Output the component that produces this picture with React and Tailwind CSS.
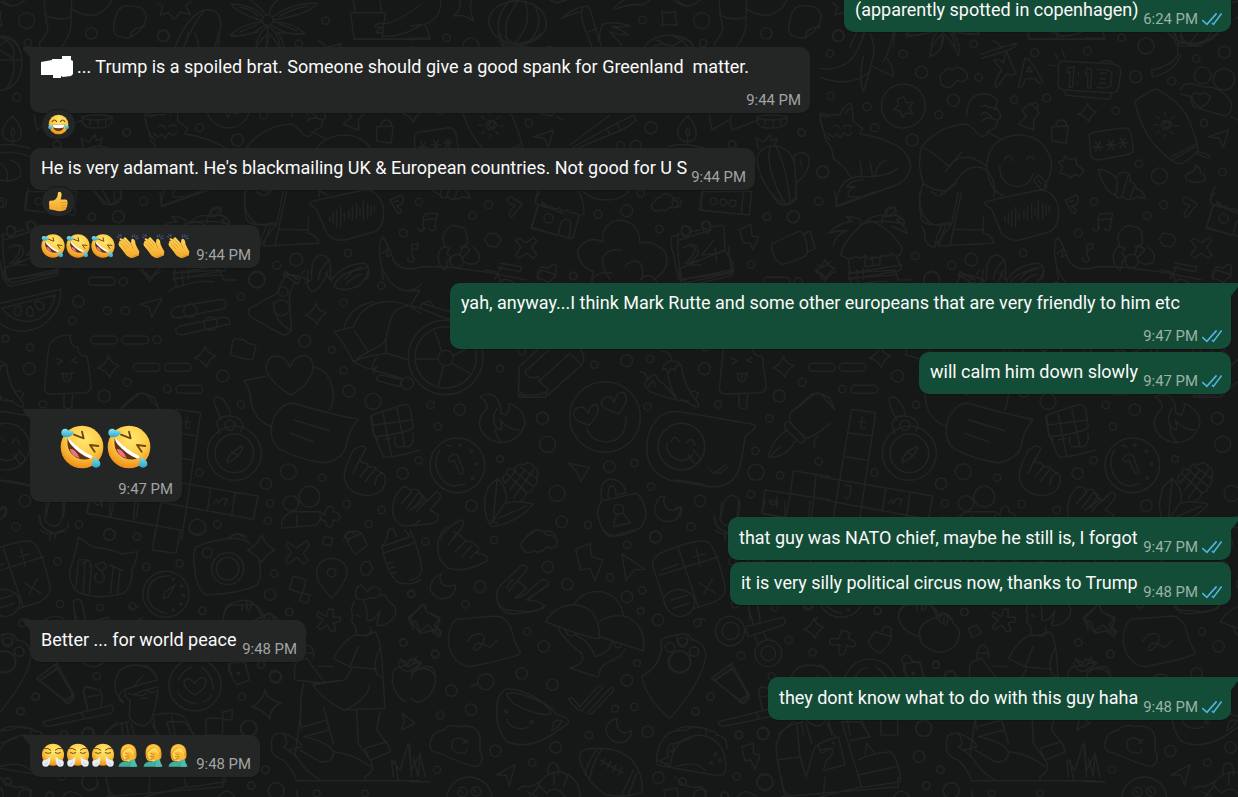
import React from "react";

/* ---------- wallpaper doodles ---------- */
// Each sheet is drawn at 3x and placed at (ox, oy) on the repeating wallpaper tile.
const SPARK = (x, y, r) =>
  `M${x} ${y - r}Q${x + r * 0.25} ${y - r * 0.25} ${x + r} ${y - r * 0.1}Q${x + r * 0.3} ${y + r * 0.3} ${x + r * 0.15} ${y + r}Q${x - r * 0.25} ${y + r * 0.3} ${x - r} ${y + r * 0.15}Q${x - r * 0.2} ${y - r * 0.2} ${x} ${y - r}Z`;

const SHEETS = [
  {
    ox: 0, oy: 0,
    circles: [[80,62,24],[274,100,17],[490,108,16],[977,62,11],[84,129,11],[50,292,12],[803,60,16],[380,398,11],[172,434,12],[275,650,11],[355,650,18],[34,692,14],[95,676,12],[5,608,14]],
    paths: [
      "M132 0Q136 50 144 88Q138 108 118 128Q118 142 128 146M215 0L212 85Q205 115 185 140M134 45Q175 65 215 50",
      "M212 25Q250 50 285 45Q325 30 335 0",
      "M372 18Q348 30 345 60Q335 95 350 106Q372 116 390 114Q432 88 438 58Q440 32 420 22Q395 16 372 18ZM390 112Q395 80 436 82",
      "M470 8L488 20L480 45L505 38L522 58L542 36L572 44L556 18L574 4",
      "M526 140Q556 56 610 30Q665 22 662 80L655 140M552 140Q580 68 612 34",
      "M798 44Q770 10 735 -10M808 42Q812 10 850 -12M790 50Q750 10 692 12Q720 45 788 62M818 50Q880 5 952 10Q925 45 820 60M788 66Q735 68 692 104Q750 115 796 74M820 66Q875 65 914 100Q865 112 812 74M800 78Q770 110 768 140M808 78Q840 110 840 140M803 80L800 140M720 22Q750 25 775 48M925 18Q880 25 840 48M720 96Q745 85 770 75M890 92Q860 78 838 72",
      "M1052 38H1156L1145 118H1062ZM1065 36L1060 0M1145 38L1140 0M1260 15Q1180 75 1150 70Q1125 70 1125 80L1150 82Q1125 90 1130 98L1150 98Q1145 108 1155 108Q1200 112 1260 78M1150 118H1260",
      "M-10 108Q66 110 66 190Q60 272 -10 272M0 112Q50 130 40 175Q50 220 20 265M0 180H62M40 175L0 150",
      "M38 348Q-6 388 14 415Q38 435 62 414Q70 384 38 348ZM38 385Q28 400 38 410Q50 400 38 385M38 412V432M-20 440Q20 425 90 445M0 460Q40 450 88 470",
      "M0 490Q30 510 20 540M30 480Q70 490 60 530Q30 550 0 540",
      "M85 565Q78 600 80 630L125 636M285 575L310 612Q340 615 355 600Q370 590 360 575M310 575L330 608",
      "M480 575L485 618L600 575",
      "M735 575Q725 640 770 672Q800 680 830 672L780 738M770 575Q800 600 800 575M830 672L850 575",
      "M10 700Q5 720 12 790M12 720Q60 705 108 690M45 740Q75 725 68 765L40 795H80M12 790L20 838L170 815L160 740",
      "M580 660Q600 640 640 650Q620 625 650 620Q670 625 660 645Q690 655 688 672M555 672Q620 655 690 672",
    ],
  },
  {
    ox: 410, oy: 0,
    circles: [[697,60,11],[723,383,18],[632,436,11],[677,437,16],[966,433,11],[1175,397,11],[1238,515,17],[1226,604,12],[1150,650,18],[1071,651,11],[911,604,10],[940,607,10],[968,610,10],[748,687,11],[650,632,18],[564,643,12],[692,580,11],[1023,793,11],[416,655,14],[489,828,11]],
    paths: [
      "M755 33Q775 42 798 35Q793 55 802 76Q778 70 755 78Q762 55 755 33Z",
      "M150 0Q155 30 130 48Q165 42 192 64Q176 30 184 0",
      "M92 0Q95 55 45 72Q20 76 0 78M45 72L60 115H0",
      "M236 65Q240 10 323 2Q405 10 410 75Q400 125 323 135Q240 120 236 65ZM300 2Q250 50 270 120M325 2Q270 70 295 130M345 4Q370 80 310 132M370 12Q410 70 355 128M270 122Q270 138 290 138H350",
      "M455 55Q485 25 530 18L540 28L568 125M520 20Q505 40 530 100L545 138M515 35Q490 38 455 55M575 75Q600 60 662 78Q620 82 605 80Q640 90 655 105Q620 105 600 95L635 135M578 75Q560 110 575 138M530 98L560 85",
      "M420 0L440 8L470 0M610 25Q640 -5 660 -5M615 28Q655 10 700 15L720 0M790 0Q830 35 870 0M800 -5Q810 15 835 18",
      "M705 138Q730 105 780 105Q840 108 850 138M740 120L775 138M820 118L790 138M730 140Q760 125 790 140",
      "M480 435L600 345M488 442L620 370L672 345L678 362L640 388L510 442M590 385L600 405M620 368L630 390",
      "M898 345L905 390L960 358L965 390Q1010 375 1042 360M965 345L960 358",
      "M1042 350Q1085 338 1132 350L1130 368Q1118 386 1087 384Q1050 386 1042 368ZM1042 355Q1085 365 1130 355M1065 360V375M1090 362V378M1112 360V375",
      "M1040 475Q1055 436 1090 438Q1145 440 1155 500L1160 595Q1145 618 1120 614Q1050 560 1040 475ZM1080 442Q1065 500 1120 605M1098 440Q1130 500 1140 605M1155 500L1152 468Q1188 445 1198 478Q1198 520 1160 548M1045 446L1038 415L1062 426L1080 403L1084 422L1102 415L1094 436M1170 480L1175 500",
      "M1230 340Q1235 400 1260 420M1230 340Q1250 340 1260 350",
      "M875 575L1025 574L1018 645L868 630ZM1000 575L994 642",
      "M730 630Q715 612 735 605Q738 590 752 592Q765 572 780 586Q795 592 790 600Q810 602 804 616Q795 628 780 622Q765 638 755 628Q740 636 730 630Z",
      "M520 575Q550 602 595 600Q640 598 658 572",
      "M390 580Q375 590 376 608Q390 620 398 612Q410 628 422 618Q435 632 446 624Q460 640 472 630Q485 644 496 638Q512 652 522 640Q522 600 505 575M385 615L363 685L488 716L508 646M445 705L452 670Q465 650 480 662Q486 680 475 714",
      "M578 725Q575 665 632 660Q688 668 690 728Q730 720 765 755Q785 810 730 838M578 725Q530 705 503 750Q505 800 550 815M600 838Q570 800 580 770Q600 740 635 752M645 800Q660 780 685 785Q705 800 695 838M550 815L545 838",
      "M785 710Q780 740 790 760L805 838M785 710L815 702M842 695L868 690M905 680L935 676Q942 676 942 690L945 750M815 682Q828 670 840 690Q840 710 825 712Q812 705 815 682ZM875 668Q890 655 902 678Q902 698 888 700Q875 692 875 668ZM820 745Q850 720 855 750Q850 770 825 790L865 782M910 722L875 765L928 760M915 745L920 785M810 805L945 750L968 790Q970 815 950 820L815 838",
      "M988 690L1022 672L1026 708L1046 712L1028 750L1020 728L1000 728Z",
      "M1088 730L1165 695Q1190 690 1192 760Q1185 775 1120 793Q1095 790 1085 745ZM1178 705L1200 692L1215 745L1195 755",
      "M1225 795Q1240 810 1260 785M1215 810Q1235 815 1235 838",
    ],
  },
  {
    ox: 145, oy: 0,
    circles: [[55,107,18],[30,160,11],[249,162,12],[305,217,18],[476,232,11],[32,288,11],[141,320,12],[356,344,12],[400,301,18],[582,299,11],[680,294,12],[644,158,12],[802,153,12],[461,131,11],[905,113,11],[978,138,24],[947,230,18],[1213,157,18],[1129,176,11],[1055,243,12],[1148,226,25],[1212,238,32],[887,332,11],[164,383,12],[277,420,18],[8,516,18],[1152,369,11],[957,491,11],[1018,528,24],[1208,516,11],[822,605,11],[1031,614,12],[982,647,11],[775,699,12],[609,759,11],[286,768,11],[454,779,19],[395,796,12],[250,318,66],[336,838,24],[935,783,20],[1040,374,8]],
    paths: [
      "M150 100Q165 130 160 165Q150 220 130 275Q115 240 130 170M0 232Q90 265 145 218M0 205Q50 215 92 180Q125 140 130 95M160 200L220 230Q220 200 200 175M220 95Q215 140 190 185",
      "M482 165Q500 155 590 130Q585 145 560 152Q575 200 588 215Q590 230 560 222L530 262Q515 258 545 210L520 180Q540 175 550 190L560 152L485 175M520 122Q540 130 545 145M595 260L615 175Q630 170 668 245Q655 255 645 235L615 238Q610 265 595 262ZM620 215L628 200L636 215Z",
      "M715 200Q715 182 735 184L880 192Q905 196 902 220L895 265Q890 280 870 278L730 270Q710 265 715 240ZM735 272L738 286L870 298L875 280M840 190Q845 178 875 185L878 192M705 160L715 180M725 150L735 172M688 195L710 198",
      "M742 205L762 200L758 262L748 262L750 215L740 218ZM775 218V226M773 245V252M800 205L815 208L812 265L802 262L804 222L796 222ZM832 208Q880 205 875 230Q868 236 875 250Q870 270 830 262M840 220H858M842 236H856M838 250H856",
      "M362 245Q355 225 372 215Q380 200 398 210Q410 195 430 208Q450 225 438 240Q425 250 412 240Q400 260 385 262Q365 262 362 245Z",
      "M250 290L260 308L280 306L268 325L278 342L258 338L248 352L240 334L220 328L236 315L232 298Z",
      "M0 345L20 350Q25 340 60 345Q70 320 90 308Q100 320 98 362L128 385L120 402Q180 410 235 440Q270 465 272 500Q265 540 230 555L50 620Q45 585 70 550Q95 525 140 530Q200 530 235 505M0 360Q10 385 18 425Q35 430 40 475Q60 490 75 505Q85 525 95 530M75 345Q80 330 90 325M40 380Q50 370 60 385M70 380Q85 370 95 380M25 400L40 412L50 402L60 415L72 398L85 408L95 398M120 480L125 525M150 485L158 528M165 525Q170 490 200 480M130 540Q95 540 80 560L105 560Q80 570 85 590L115 590",
      "M440 350Q440 300 470 285Q500 275 520 290Q540 300 525 320Q545 340 540 355L532 362Q535 385 510 390L495 408Q475 412 465 390L440 372M485 320Q495 310 505 322Q520 320 528 330M485 345Q490 330 505 342L515 350M485 365Q500 345 530 360",
      "M440 372Q360 375 305 440Q345 460 375 490L390 498Q410 470 445 472Q475 478 500 500M305 440Q290 490 310 550Q340 575 380 572Q410 545 425 520Q470 485 505 515Q530 550 522 590M375 515L425 455M310 550Q290 600 305 660Q320 680 365 672L390 668M365 585Q400 555 410 550M425 575L390 735M305 680Q315 690 315 720Q330 745 345 740L350 710Q360 695 365 672M375 680L355 738L522 730Q515 705 490 700V650M400 688L490 690M500 395L540 415",
      "M672 560Q710 500 685 460Q660 405 595 405Q510 410 500 490Q500 560 545 585M540 498Q535 550 590 560Q630 558 640 520M552 480Q565 455 580 482M618 480Q630 458 645 482M640 540L665 570Q685 565 678 545L655 525ZM655 540L665 552M522 570Q535 582 550 585",
      "M492 608Q510 600 660 570Q700 570 715 620Q720 680 690 695L600 720Q565 725 545 700L515 628Q495 615 492 608ZM555 650V665M565 638V672M575 630V680M587 622V680M598 640V660M612 632V655M622 620V660M635 612V655M645 625V645M655 602V658M668 610V655M678 615V645M688 618V635",
      "M605 330L630 310Q650 325 658 340L640 360L642 390Q625 385 595 372L620 350ZM635 315Q645 300 655 315L650 330",
      "M695 380L745 378L738 430L695 422ZM708 376Q710 358 728 360Q742 365 738 378",
      SPARK(802, 338, 28),
      "M808 405Q810 398 830 395L910 383Q930 383 934 405L940 450Q938 460 920 464L835 480Q815 480 812 465ZM820 440H848M826 425L842 452M842 425L826 452M858 434H888M866 420L880 448M880 420L866 448M896 428H922M902 415L916 442M916 415L902 442",
      "M945 305Q990 268 1012 268Q1070 300 1100 345Q1125 400 1135 450Q1100 490 1075 492Q1045 480 1000 430Q960 380 945 305ZM1055 470L1130 430M1060 478L1125 440M1030 365Q1050 355 1055 375Q1050 390 1030 388Q1018 375 1030 362M1035 335V345M1010 350L1018 356M1000 375H1012M1010 402L1018 394M1035 412V402M1060 402L1052 395M1075 378H1063M1062 350L1054 357",
      "M1165 410L1226 390L1210 442L1198 415Z",
      "M1080 270Q1090 245 1120 252L1150 260Q1210 260 1235 310Q1235 345 1215 348L1120 320Q1110 300 1115 290L1082 282M1115 290Q1120 270 1140 285Q1155 270 1170 290Q1172 305 1145 322Q1120 315 1115 290M1235 350L1254 360",
      "M1065 100L1075 130Q1070 150 1075 165Q1050 200 995 210L997 230Q1060 220 1082 165M1075 130H1110Q1160 130 1190 100M1080 110L1110 135",
      "M1132 455Q1160 460 1170 468L1165 475L1130 460M1100 540Q1090 525 1110 518Q1130 510 1125 495Q1145 505 1140 518Q1160 525 1155 540Q1135 555 1100 540Z",
      "M735 468L750 480L768 475L770 495L792 510L780 530L762 522L755 535L742 525L720 520L728 500L715 485L730 482Z",
      "M835 508Q870 510 890 535Q895 560 885 585Q850 570 835 508ZM890 530Q900 510 925 520Q935 530 930 545Q950 550 948 565Q970 570 975 595L950 590Q945 600 935 595Q920 605 910 590Q895 600 885 585M925 525L905 590M945 555L930 592",
      "M735 600L770 585Q780 595 770 612L755 618L770 632Q765 645 755 635ZM748 605L760 602",
      "M1085 600Q1095 585 1105 595L1132 612L1100 652Q1088 650 1095 635L1110 615L1095 612Z",
      "M835 685V650L840 642L878 640L870 680M838 660L875 655M818 685A10 8 0 1 0 836 680M852 685A10 8 0 1 0 872 680M790 772A10 8 0 1 0 802 770L800 735L818 730V745L804 750",
      "M140 662Q195 665 248 745L240 765Q225 775 215 760Q200 775 190 765Q175 780 165 770Q150 785 135 765Q120 780 110 770L85 778L62 765Q70 720 140 662ZM185 670Q190 625 228 622Q225 635 205 650Q230 640 245 655L230 660Q255 675 262 700Q240 690 215 678M125 665Q115 650 80 650L95 665Q60 665 25 700Q60 690 80 692Q45 705 40 738M85 780L90 815M230 770L240 795M135 770V800L180 795V765M155 770L160 795M85 820L245 795L240 812L85 838M130 805V838",
      SPARK(15, 808, 30),
      "M705 770Q700 720 715 712Q735 745 745 780Q770 820 830 800L900 800L1050 820M705 770L715 838M712 760L730 745L725 770L740 765",
      "M900 740Q885 705 905 690Q920 670 940 680Q965 680 965 705Q975 740 945 740M900 740L915 745L905 760L918 775L905 785Q910 800 900 810Q880 800 880 770Q880 745 900 740ZM945 765L950 745Q965 735 975 750L950 775M985 742Q1010 760 1000 785Q980 800 955 785",
      "M1030 700L1056 702L1068 720L1056 740L1030 738L1018 718Z",
      "M1122 715L1145 728L1165 712L1175 722L1160 742L1176 765L1165 775L1145 760L1122 775L1112 765L1128 742L1112 722Z",
      "M1065 790L1130 800L1125 815L1060 802M1050 838L1070 800",
      "M1180 838Q1170 815 1190 800L1210 805Q1225 785 1235 800L1230 830",
      "M420 815L455 838M500 838Q495 770 530 765Q565 770 555 838M520 838Q525 800 555 780M560 838Q600 790 660 790Q680 810 665 838M600 838Q620 810 650 802",
      "M1185 560Q1170 590 1172 610L1200 622L1190 605L1215 625L1254 640M1180 615L1160 682L1235 705",
      "M625 100L628 118H855L850 100M260 110Q300 105 340 95M370 100Q330 130 330 170Q365 160 372 110M372 100Q400 130 415 168Q425 130 395 95M400 98L480 102",
    ],
  },
  {
    ox: 0, oy: 270,
    circles: [[370,35,12],[235,94,17],[322,122,12],[376,122,12],[217,152,11],[16,206,10],[90,232,11],[88,296,18],[471,209,12],[668,318,18],[382,337,12],[502,357,11],[313,378,18],[129,403,11],[770,30,24],[723,80,11],[1031,98,11],[1144,47,11],[914,213,18],[995,240,10],[1031,301,11],[1047,363,18],[1119,394,24],[723,404,11],[865,605,24],[798,641,17],[966,623,11],[1208,610,17],[598,608,11],[810,700,11],[803,752,11],[592,772,24],[652,764,11],[873,700,23],[928,680,31],[1040,702,11],[1145,720,11],[1106,762,11],[75,693,17],[48,770,12],[237,764,11],[328,794,17],[411,800,11],[571,122,20],[632,161,20],[845,113,24],[850,65,14],[703,550,81],[703,550,58],[690,466,15],[1222,340,18]],
    pills: [[265,22,80,24],[272,198,80,24],[366,198,80,24],[400,280,80,24],[493,280,80,24],[528,346,80,24]],
    paths: [
      "M12 0L15 30Q20 48 35 48L165 18Q178 12 175 0M20 30L165 0",
      "M0 100L182 58Q185 120 130 165Q60 205 0 160M5 115L165 75Q160 120 115 148Q50 170 5 115ZM42 130Q40 110 60 108Q70 125 58 136Q45 138 42 130ZM80 120L90 108Q105 125 98 138Q85 142 80 130ZM104 98Q120 88 134 108Q130 122 118 120Q106 112 104 98Z",
      "M145 240Q150 195 212 195Q205 225 235 235Q230 255 262 260L273 345Q275 365 255 368L150 372Q135 370 133 355ZM170 265L188 273L172 282M230 262L215 272L232 278M182 310Q200 315 220 308M188 312Q188 335 202 335Q215 330 214 312M200 315V325M192 373V408Q200 422 215 412L218 372",
      SPARK(325, 290, 32), SPARK(615, 260, 32), SPARK(947, 132, 32), "M425 8Q440 10 450 35Q460 10 482 5",
      "M420 103L486 85L455 142L448 112Z",
      "M530 110L665 88Q685 95 675 115L545 142Q515 148 514 130Q515 115 530 110ZM540 168L670 142Q692 142 690 162L545 195Q525 192 527 178Z",
      "M520 5L530 50L505 65M545 0L550 45L530 52M520 25L660 15M550 45Q600 30 640 35M660 0L670 30L710 30M520 10L660 0",
      "M848 12L860 8L900 28L895 42L882 38L868 75L874 180Q865 195 850 195L750 140Q740 125 750 115L830 70L855 20M820 95Q820 150 870 180M848 12L895 42",
      "M925 0Q915 50 935 65Q965 60 985 0M1002 50Q1010 20 1050 5Q1085 0 1105 -10M1002 50Q1030 70 1080 45Q1100 25 1105 0M1040 40Q1060 20 1085 12M1150 0Q1170 50 1215 62H1260M1260 60L1230 110",
      "M698 212Q708 200 718 210L730 208L740 218L768 226L758 268Q750 272 692 254Z",
      "M872 375Q800 330 798 292Q802 255 835 258Q860 265 870 292Q880 258 915 256Q945 268 938 305Q920 350 872 375ZM942 292Q990 300 1000 370Q1000 400 988 420M800 318L730 332Q750 350 752 390Q760 450 815 470",
      "M880 400Q850 395 822 440Q800 500 835 535Q900 570 970 578Q1025 570 1038 530Q1045 480 1075 448Q1000 435 880 400ZM882 450L988 482M870 490L940 515",
      "M665 450Q635 395 645 382Q670 375 690 425L692 440M650 460Q660 435 690 438Q725 440 730 468M650 460L660 490M730 468L722 485M682 578Q680 550 728 528Q725 560 682 578ZM695 545L715 558",
      "M1115 435L1215 403Q1230 405 1232 420L1240 470Q1225 490 1122 500ZM1112 440L1120 490L1135 510M1148 425L1175 560M1190 412L1215 530M1118 465L1238 450M1125 500L1150 560Q1160 568 1260 540M1185 500Q1180 520 1190 530L1225 530Q1245 520 1238 490M1150 510L1172 505",
      "M1035 600Q1040 580 1060 540Q1090 520 1098 535L1075 580M1035 600Q1025 640 1060 665Q1110 690 1145 660Q1165 630 1150 610Q1130 605 1125 590Q1105 595 1100 580Q1080 580 1078 565M1060 610L1075 575M1080 620L1105 590M1095 635L1125 598M1125 645L1130 620L1145 610",
      "M530 418L602 428L545 808M530 418L465 800M520 488L592 498M508 560L580 570M435 620L774 678L760 748L458 692M260 730L540 780M260 730L272 690M330 695V740M405 695L400 755M632 655L622 725M705 668L695 738M552 455L572 457M562 440L557 470Q562 482 570 472M508 645L528 648L524 682Q515 690 508 680M642 700Q650 680 655 700Q665 680 682 688L672 708M290 695Q300 685 305 710M0 630Q50 635 90 645",
      "M365 415L420 370Q435 365 445 380L480 420M440 375Q465 375 475 410",
      "M120 740Q118 780 165 790Q210 785 205 755M140 695L135 750Q150 775 175 765Q190 750 190 695M165 790V808",
      "M845 775Q840 735 880 725H960L975 735Q975 710 992 708Q1005 712 1000 725Q1022 728 1020 745Q1010 755 1000 750Q1000 775 985 770Q975 765 978 755Q958 750 960 735M845 775L950 765L960 750M890 735V770",
      "M1180 700Q1185 670 1210 650Q1230 650 1235 665L1215 690M1180 700Q1170 740 1200 765Q1240 775 1260 750",
      "M1003 185L1060 170Q1090 90 1180 95Q1230 100 1260 130M1003 185Q1040 230 1060 275Q1120 310 1130 290L1120 310M1030 180Q1045 110 1120 95M1060 275L1105 245L1065 185M1105 245Q1150 225 1155 210M1060 275Q1090 260 1130 255L1160 250Q1150 200 1180 130Q1210 95 1260 115M1160 250L1225 270M1130 262Q1110 290 1120 300L1205 325M1130 325Q1135 315 1145 315L1205 328L1200 350L1145 335Q1130 335 1130 325",
      "M0 715Q30 700 15 740M1030 808Q1050 770 1085 790M1160 808Q1165 770 1180 775L1190 800M685 808Q710 780 740 800",
    ],
  },
  {
    ox: 410, oy: 270,
    circles: [[270,296,11],[62,405,11],[149,419,17],[84,470,11],[397,445,18],[413,523,24],[270,567,10],[26,571,11],[184,707,17],[598,590,17],[674,579,11],[441,670,24],[455,756,17],[534,765,11],[723,650,11],[713,410,11],[720,267,11],[650,272,18],[553,284,11],[736,800,17],[335,243,11],[107,262,112],[107,262,92],[107,264,23],[585,441,106],[142,586,82],[814,530,70],[149,525,4],[184,544,4],[200,582,4],[187,625,4],[1078,446,11],[1036,543,11],[1038,607,24],[1110,616,11],[1226,574,11],[1023,673,11],[626,718,15],[490,18,11]],
    paths: [
      "M95 243L75 185M128 258L190 225M125 280L180 310M100 288L85 348M84 266L18 268",
      "M0 60Q25 55 35 40M30 115L120 150M30 115L35 100L120 125M45 98Q60 85 68 105",
      "M325 382L328 290L385 237M325 382L405 382L515 285Q530 260 510 237M345 305L420 237M385 335L480 250M345 305Q350 330 385 320Q390 345 415 355L405 382M325 360L350 382M485 255L515 285",
      "M210 380Q240 365 255 380Q275 400 272 430L288 435Q300 420 298 400Q345 420 345 460Q330 515 272 518Q215 510 208 460Q210 430 230 418Q235 395 210 380ZM262 415Q240 445 260 475L275 480Q275 460 270 450Q295 480 330 480M255 478Q260 505 275 515",
      "M538 465Q490 455 490 430Q495 408 520 412Q530 420 535 430Q540 402 560 404Q575 425 538 465ZM625 432Q575 415 573 400Q580 375 605 382L612 398Q618 368 638 366Q665 385 625 432ZM530 475Q545 515 590 516Q650 510 648 440",
      "M690 305Q710 305 712 330Q735 300 745 330Q770 345 800 390M835 392Q790 395 720 365Q695 340 712 330M715 350L730 330L735 350M755 245Q780 240 785 272Q760 275 758 300L768 295L775 308L785 295L795 302L800 285L815 288Q810 275 785 272M772 305Q780 360 800 385M815 290Q820 350 865 400Q870 415 855 410L815 388M840 370Q850 355 865 370L860 385",
      "M740 450Q760 420 810 425L1025 462Q1040 465 1035 475L1005 500Q1000 540 990 590Q970 655 900 650L780 630Q715 610 710 540Q710 480 740 450ZM770 520Q770 565 815 572Q840 570 850 550M782 515Q795 490 808 515M830 520Q845 495 855 525M835 555L855 582Q875 575 868 560L850 540M898 598L912 612L945 585M915 605L930 610L955 588",
      "M475 580L538 592L512 635L500 605Z",
      "M575 690Q565 630 605 627Q640 630 648 668L618 675Q615 640 600 650Q592 660 595 682M575 692L680 670Q705 690 708 735Q700 775 680 778L600 800Q575 790 562 730Q565 705 575 692ZM620 732L610 770L662 758L638 728",
      "M752 678Q730 705 735 730Q755 765 795 750Q815 730 812 710Q790 730 770 715Q755 695 765 680Z",
      "M235 650L262 625Q290 650 290 690Q260 740 240 765M235 650Q220 690 225 720Q230 750 240 765M262 625Q255 690 250 750M290 700Q310 690 370 702Q330 750 270 765L245 770M265 745Q320 720 350 708M240 750L262 760M285 640Q270 620 290 610Q290 590 310 600Q325 575 340 585Q360 570 370 590Q390 600 380 620Q385 640 370 650Q365 670 350 668Q345 690 330 692M290 610L350 668M310 600L370 650M330 590L380 625M300 660L345 600M310 685L370 600M285 640L320 600",
      "M90 540Q75 560 78 590Q90 640 130 648L165 642M110 525L125 530M118 560Q110 570 120 575L132 572L150 610Q160 615 162 605L145 560Q135 545 118 560Z",
      "M0 660Q30 650 35 680Q30 700 0 720M35 680L50 690L20 725M50 695L80 665Q95 670 90 685L60 720L85 735Q85 755 70 760L0 768M90 808Q100 780 150 750Q165 750 160 765L130 808M350 800Q370 770 400 785Q430 775 440 808",
      "M1140 430L1205 372Q1230 365 1260 385M1140 430Q1135 450 1150 470L1190 505Q1215 500 1260 460M1125 460Q1130 450 1145 462L1185 505Q1180 525 1165 515L1125 475ZM1130 480Q1095 500 1075 555Q1075 565 1090 562Q1135 555 1155 515M1080 560L1110 530M1225 500Q1205 510 1215 535",
      "M1150 602L1140 680L1128 740M1150 602L1260 620M1065 660L1260 690M1065 660L1055 730L1125 742M1218 615L1205 740M1080 690A10 10 0 1 0 1098 690M1100 682L1102 710",
      "M912 735Q915 780 950 785M935 735Q940 680 965 676Q990 680 990 705L985 740",
      "M380 20L395 0L440 15L415 38Z",
      "M545 35Q560 0 605 10M690 30Q720 0 740 35M805 0Q810 30 830 38L960 10Q970 5 970 -5M250 10L350 30M270 35Q290 20 310 38",
    ],
  },
  {
    ox: 145, oy: 270,
    circles: [],
    paths: [
      "M540 10L562 35M480 0L470 12M415 20Q440 5 495 32L480 38M1020 0L1050 5Q1075 30 1060 50",
      "M770 700L800 665M785 715L820 668Q840 675 835 690L810 715",
      "M1120 375H1180L1205 365",
    ],
  },
  {
    ox: 0, oy: 530,
    circles: [[328,14,17],[411,20,11],[172,94,11],[439,111,11],[539,100,11],[180,222,11],[397,229,11],[299,233,10],[607,242,11],[498,193,69],[683,116,48],[683,116,34],[622,68,15],[810,194,17],[822,130,11],[868,246,11],[995,128,13],[290,439,11],[107,500,11],[62,544,11],[585,465,78],[715,430,4],[726,500,11],[827,442,17],[783,405,10],[1233,192,11],[1210,338,11],[745,595,24],[797,720,11],[754,767,11],[828,782,24],[270,758,24],[265,610,18],[22,755,11],[150,797,11],[193,614,11],[22,328,17],[58,365,14],[15,395,32],[680,808,24],[1095,790,10],[520,148,3],[545,168,3],[551,196,3],[543,222,3],[520,240,3]],
    paths: [
      "M120 0Q140 15 165 10L190 0M150 12V32M465 0L458 60L528 70L542 0M565 0Q590 25 620 0",
      "M235 22L282 52Q330 55 365 72L412 65Q410 95 395 120Q400 165 370 190Q300 210 240 190Q205 170 210 120Q225 80 235 22ZM235 90Q280 85 270 110M270 90L245 100M235 95L228 170M255 95L250 190M275 105L268 190M285 105L310 95L320 110L305 125ZM290 130A14 16 0 1 0 308 130M330 105L370 122M340 110L332 190M360 120L352 195",
      "M490 205L495 185L525 165L505 200ZM510 138Q445 135 443 193Q445 240 500 250",
      "M590 50Q620 35 690 25Q740 25 755 45M590 50Q575 70 585 120Q590 180 620 195Q720 190 770 165Q790 140 775 85M685 25Q710 0 735 25",
      "M785 15Q795 45 825 60Q800 70 785 98Q770 75 742 60Q770 50 785 15Z",
      "M862 35L890 55L920 32L928 45L910 70L925 92L912 102L890 82L865 102L856 90L875 68L858 45Z",
      "M970 25L975 20L998 25L992 48L968 42ZM1035 20Q1040 0 1055 5L1065 15M1040 30L1085 10L1102 45L1065 75ZM1045 35L1035 15",
      "M1080 112L1092 95H1108L1118 115L1105 135H1088ZM1165 0Q1165 25 1145 50L1230 20L1215 0M1145 50L1150 70L1240 40M1150 70Q1160 120 1190 155Q1230 170 1260 150M1165 100L1180 95M1172 115L1185 110M1175 130L1190 125",
      "M995 205Q945 150 950 125Q955 88 995 85Q1040 90 1042 130Q1035 160 995 205Z",
      "M880 138L918 150L908 190L868 178ZM905 190L930 195L922 220L900 212Z",
      "M670 268Q670 220 710 215Q740 205 760 220Q780 240 785 260L805 248L830 270M725 222V240M740 215V240M755 222L750 240M795 255V268",
      "M955 245L980 260L985 238L1000 238L998 262L1022 262L1020 275L1000 278L1008 302L995 305L980 285L960 300L952 290L970 270L950 258Z",
      "M1070 205Q1060 170 1085 165L1102 185Q1120 160 1140 178Q1150 205 1105 205Q1090 215 1070 205ZM1140 195L1155 195Q1160 210 1185 230Q1195 260 1160 280Q1145 290 1130 285M1062 215Q1050 240 1058 255L1055 275L1068 290Q1065 310 1075 315Q1100 320 1115 305L1110 290M1090 210Q1105 240 1100 270Q1120 280 1140 240L1130 285M1070 255L1080 260",
      "M1065 315Q1030 330 1000 385L1050 410L1075 350M1065 315L1100 318L1125 305Q1145 330 1148 430M1050 410L1130 418M1055 415L1035 450L940 460M1000 410L955 408M1140 355Q1125 380 1125 415Q1130 440 1145 440",
      "M885 450Q880 410 890 395L920 385L975 460L885 450M905 385Q905 350 925 345Q945 355 940 385M905 370H940",
      "M938 465Q980 520 1035 540Q1100 510 1110 465M1035 540L1155 535L1148 430M1035 450L938 465M910 460Q895 540 905 600M970 530L1000 640M910 590L980 570L988 600L910 620M915 620Q990 640 1000 665Q1000 700 960 695L900 660M905 530L885 680M1070 540L1075 640L1110 690M1140 545L1130 600L1160 640M1095 655L1160 635L1172 665L1110 690ZM1110 690Q1130 720 1095 740V750",
      "M815 645Q810 605 850 610Q890 625 905 645M815 645Q810 680 850 690Q880 720 890 752H1260M850 610Q870 645 850 650L890 680Q920 730 960 750M1000 665Q1060 670 1110 710M905 650L870 660M1180 740L1175 690L1200 720L1225 640L1235 720L1255 680M1185 690L1195 750",
      "M110 445L165 405L220 495L195 510ZM120 450L170 415M195 510L205 522L222 505L215 492M250 485L258 470L300 480L308 500L300 535M250 485L262 540M262 500L300 495M130 575L335 525Q345 535 335 550L150 588Q130 590 130 575ZM245 550L252 562",
      "M345 470Q345 410 400 405Q460 405 472 450Q430 460 400 470L370 480Q345 500 370 520M345 470Q345 495 370 515M370 480Q380 475 375 500L390 510L388 560Q400 585 430 588Q455 580 460 550L465 530L475 480M400 470L430 435M385 490Q400 500 420 485L475 470M400 490Q420 505 440 490M440 480Q455 495 475 480M425 505H445M310 615Q330 585 385 575M460 555Q540 540 560 570L580 615M380 580L385 615M460 565L470 615M515 560L525 615",
      "M585 495Q550 475 552 455Q560 435 585 460Q605 430 618 450Q620 475 585 495ZM535 450Q555 415 575 412M605 412Q640 435 640 480M535 490Q555 520 590 520M610 515Q630 510 635 495",
      "M685 420L690 400L735 395L748 450L710 465ZM690 415V400",
      "M795 478Q800 510 845 518Q810 530 810 567Q790 540 755 530Q790 515 795 478Z",
      "M618 565H668V615H618ZM668 545L698 540L695 570L668 568Z",
      "M1205 410Q1175 410 1177 455Q1190 510 1220 515M1205 410Q1220 400 1230 410Q1240 395 1260 400M1220 410L1200 385L1225 400ZM1235 405L1250 380",
      "M1208 550L1245 580L1205 600L1212 575Z",
      "M0 605Q15 580 90 595L95 615M0 640L50 625M0 710Q60 690 90 720",
      "M225 270L220 215Q235 200 245 215L255 265M420 270L428 262M55 275Q70 260 90 270M1260 235L1225 262L1240 300",
      "M320 742Q320 790 350 800M450 742L445 800M320 800L670 770L668 742M0 740Q30 780 80 770Q100 800 90 808M890 790L895 808",
    ],
  },
  {
    ox: 410, oy: 530,
    circles: [[46,34,11],[252,30,11],[4,192,10],[413,111,17],[210,170,17],[472,163,17],[651,44,11],[601,142,11],[736,22,17],[697,181,11],[651,201,17],[692,243,10],[744,270,17],[166,223,11],[351,305,11],[401,349,17],[75,372,11],[335,430,17],[427,464,17],[227,455,24],[124,482,17],[183,539,17],[91,556,11],[681,399,10],[651,451,17],[615,536,10],[673,531,11],[713,605,17],[537,616,11],[437,652,17],[256,663,17],[367,698,11],[81,719,11],[745,743,17],[818,755,11],[780,352,14],[818,337,14],[852,365,14],[808,396,33],[289,544,5],[365,577,5],[917,672,4],[930,692,4],[903,698,4],[857,544,11],[902,500,11],[862,279,11],[993,377,11],[960,303,44],[962,303,26],[1075,370,40],[1075,370,22],[1136,330,11],[1208,367,11],[986,615,11],[1058,612,17],[980,740,11],[1064,755,24],[943,798,11],[198,784,14],[157,786,14]],
    paths: [
      "M85 30Q95 0 110 -10M85 30Q75 90 115 115Q170 130 235 90Q235 75 200 70Q215 50 195 45Q190 30 170 35Q160 20 130 5M115 45L140 10M135 65L165 35M155 80L185 48M180 85L200 65",
      "M340 60Q325 45 345 25Q350 15 365 12Q385 -15 410 15Q445 15 442 45Q430 60 410 50Q390 75 375 62Q350 75 340 60Z",
      "M497 58L540 40L545 80L578 90L555 152L540 115L512 120Z",
      "M636 72L705 118L672 120L648 152Z",
      "M0 0Q35 80 35 125Q30 145 0 150",
      "M95 130Q60 145 60 180Q85 220 120 200Q140 185 135 165Q110 175 95 160Q85 145 95 130Z",
      "M0 265L40 222L50 245L90 268L78 300L30 310L0 270M62 300L85 320Q95 318 90 305L75 290",
      "M260 190Q265 165 295 145L335 105Q355 105 350 120L320 155Q340 160 345 175M260 190Q260 250 310 252Q360 250 400 235Q410 215 350 210L415 165Q415 145 395 150L360 180Q350 195 320 205M295 185L320 155M315 205L350 175M290 175Q300 150 310 150",
      "M140 268L260 258Q300 260 312 330L332 370Q310 385 180 410Q130 405 115 340Q115 280 140 268ZM172 335Q190 305 215 312Q230 325 215 345Q195 370 190 355Q200 330 225 345L240 352L262 330",
      "M406 275Q440 220 500 225Q570 235 568 325Q550 330 406 275ZM490 225Q520 180 575 185Q635 200 640 258M568 275Q600 250 650 260Q710 290 700 362L568 320M445 292L450 305Q480 345 515 370Q530 400 480 415L565 442Q570 400 610 390Q640 375 645 358M465 298Q470 320 490 318L498 310M498 315Q545 340 555 380Q600 370 605 335M610 335Q620 365 635 348",
      "M730 115Q720 90 750 70Q860 25 890 35Q920 50 945 170Q950 195 915 215L855 235M730 115L760 205M760 205Q775 180 810 178Q850 185 855 215Q850 255 810 260Q770 255 760 205ZM805 55L865 230M750 135L925 80M785 210L835 195M790 235L838 220M755 120L805 102M850 80L885 72M858 55L870 108M870 160L918 190M908 145L882 192",
      "M755 350Q745 325 770 322Q795 315 810 312Q840 305 845 330Q880 330 888 375Q880 450 780 565Q710 510 695 440Q750 410 755 350Z",
      "M1005 290L1120 262Q1130 275 1120 285L1015 320ZM1015 230L1030 285M1045 230L1050 275M1035 320L1045 345M1062 310L1072 330",
      SPARK(1211, 295, 30),
      "M0 388L35 398L10 425M0 450Q10 440 5 430L35 412Q75 400 77 440Q75 500 25 517L0 505M180 470L205 460",
      "M260 545Q260 490 290 476Q350 475 430 540L440 555Q480 560 475 580L420 618Q350 660 290 635Q260 600 260 545ZM290 492Q320 480 400 520Q430 545 422 552Q380 560 310 520Q290 500 290 492ZM440 570L455 572Q450 590 425 602L432 575ZM290 568Q300 600 345 595L355 590",
      "M475 508L485 502L510 530L565 468Q580 465 578 475L515 542Q505 545 475 508ZM535 545L605 470Q615 475 610 482L545 552Q535 552 535 545Z",
      "M622 565Q585 575 588 605Q600 640 635 638Q665 630 664 602Q645 615 628 600Q615 585 622 565Z",
      "M60 640Q65 605 100 600Q120 580 150 590Q200 580 210 620V660Q225 690 205 708Q190 715 90 670Q55 665 60 640ZM150 625Q125 620 125 650Q135 675 165 668L172 658M150 625Q165 628 170 640M160 640L175 628",
      "M258 735L315 704L298 766L288 735Z",
      "M0 645Q0 690 5 740M10 685L25 740L30 670L45 740M0 755H60",
      "M110 800Q120 745 180 740Q240 750 245 800M150 780L160 790M190 778L200 788",
      "M325 780Q330 765 360 770L390 755M415 735Q410 700 430 698Q450 705 445 735M360 800L385 770M350 785L380 800M385 765Q400 730 450 725Q510 740 510 800M385 765L410 790Q440 760 465 800M432 725V765M475 730L460 770",
      "M510 690Q505 660 530 658Q620 645 665 690Q700 730 697 785Q650 805 590 795Q530 760 510 690ZM560 660Q530 700 525 735M575 660Q545 700 540 745M670 720L635 795M680 730L655 795M570 690L640 730M585 685L575 705M602 695L592 715M618 705L608 725M635 712L625 738",
      "M740 690Q740 640 775 610Q790 600 830 600Q850 585 870 595Q890 590 900 605Q920 600 920 615Q955 620 950 655M780 710Q790 620 870 615Q945 625 948 710Q945 740 930 738L755 708Q735 705 740 690ZM785 640Q765 650 775 680L755 690Q755 705 775 700M790 640V660M778 660L790 665",
      "M765 800L762 780L800 775L805 800M850 800Q855 770 890 780L885 800M985 800Q1000 770 1040 800",
      "M905 445L965 400L1018 495L995 522L985 510ZM915 452L970 415M1045 480L1055 470L1075 475M1045 480L1058 535",
      "M995 650L1030 640L1030 670L1050 675L1035 718L1022 690L1005 692Z",
      "M1150 575Q1100 610 1098 660Q1110 740 1125 800M1100 690L1170 680M1160 578L1170 680L1188 740L1215 650L1260 625M1188 580L1205 640M1225 650L1235 670L1260 655",
      "M580 0Q600 25 640 15L680 0M1185 230L1195 240L1210 230",
    ],
  },
  {
    ox: 145, oy: 530,
    circles: [[172,243,11],[433,246,11],[775,338,11],[871,372,11],[348,404,11],[312,595,24],[297,680,17],[361,719,11],[318,767,11],[394,782,24],[280,430,3],[40,638,3],[390,438,17],[515,790,10]],
    paths: [
      "M235 265Q235 235 260 225H330Q350 235 355 255M235 265Q250 310 300 320M300 320Q290 280 350 262L375 250Q395 258 400 280Q430 300 410 340Q390 370 350 365Q300 350 300 320ZM290 230V242M305 228L310 242M350 265L365 280M372 262V285M385 262L380 285",
      "M65 300L90 308L85 325L105 335Q110 350 95 350L80 345L75 370Q65 380 55 370L60 345L35 345Q22 335 35 325L55 328Z",
      "M145 335L165 305L215 320L205 345L180 370Q150 355 145 335ZM185 305Q190 285 208 290Q218 300 212 318",
      "M445 295L470 285L485 310L458 322Z",
      "M250 405Q240 380 258 375Q275 380 275 392L300 400L312 438M250 405L262 438M0 405Q25 420 35 440",
      "M790 268L830 225M790 268L812 275L825 305L848 285L885 315L890 305L868 285L885 262L845 245L840 225",
      "M0 640L55 620L75 705L15 720M20 580L45 620M65 575L125 770L0 800M65 575H120L150 620L90 632M135 675L140 640L165 670M115 690Q150 670 210 665Q235 680 242 755L130 772M115 735L235 708M0 660L35 655Q45 670 20 690L10 720",
      "M765 395Q770 385 790 400L795 388Q815 385 830 400L790 425Q765 420 760 400ZM800 425Q850 400 870 438M1010 438Q1020 425 1040 438",
      "M455 780L458 800M1065 225L1080 240L1150 245Q1190 240 1200 225",
    ],
  },
];

function Wallpaper() {
  return (
    <svg className="absolute inset-0 h-full w-full" aria-hidden="true">
      <defs>
        <g id="doodles" fill="none" stroke="#222424" strokeLinecap="round" strokeLinejoin="round">
          {SHEETS.map((s, i) => (
            <g key={i} transform={`translate(${s.ox} ${s.oy}) scale(.33333)`} strokeWidth="4.6">
              {s.circles.map(([x, y, r], k) => (
                <circle key={k} cx={x} cy={y} r={r} />
              ))}
              {(s.pills || []).map(([x, y, w, h], k) => (
                <rect key={k} x={x} y={y} width={w} height={h} rx={h / 2} />
              ))}
              <path d={s.paths.join("")} />
            </g>
          ))}
        </g>
      </defs>
      <use href="#doodles" x="-675" />
      <use href="#doodles" />
      <use href="#doodles" x="675" />
    </svg>
  );
}

/* ---------- emoji ---------- */
function EmojiDefs() {
  return (
    <svg className="absolute h-0 w-0" aria-hidden="true">
      <defs>
        <radialGradient id="face" cx=".55" cy=".3" r=".72">
          <stop offset="0" stopColor="#ffe873" />
          <stop offset=".55" stopColor="#fdcb45" />
          <stop offset="1" stopColor="#ee8a16" />
        </radialGradient>
        <linearGradient id="skin" x1="0" y1="0" x2="0" y2="1">
          <stop offset="0" stopColor="#ffd95a" />
          <stop offset="1" stopColor="#f3a62a" />
        </linearGradient>
        <linearGradient id="tear" x1="0" y1="0" x2="0" y2="1">
          <stop offset="0" stopColor="#8ce6ee" />
          <stop offset="1" stopColor="#27a9cf" />
        </linearGradient>
        <symbol id="rofl" viewBox="0 0 132 132">
          <circle cx="66" cy="66" r="64" fill="url(#face)" />
          <path d="M23 40Q18 82 50 98Q80 110 98 96Q56 78 23 40Z" fill="#5e3512" />
          <path d="M29 72Q46 70 59 99Q34 94 29 72Z" fill="#f0708a" />
          <path d="M24 38Q24 50 31 57Q60 90 91 101Q97 101 98 94Q57 74 24 38Z" fill="#fff" />
          <path d="M42 29L71 40L66 20M115 63L90 60L104 80" fill="none" stroke="#71440f" strokeWidth="5.5" strokeLinejoin="round" strokeLinecap="round" />
          <path d="M4 25Q3 10 18 11Q27 18 42 20Q38 35 18 37Q6 36 4 25Z" fill="url(#tear)" />
          <path d="M104 91Q107 103 119 108Q126 126 108 128Q92 126 96 112Q104 106 104 91Z" fill="url(#tear)" />
        </symbol>
        <symbol id="joy" viewBox="0 0 66 66">
          <circle cx="33" cy="33" r="31" fill="url(#face)" />
          <path d="M13 24Q20 14 27 24M39 24Q46 14 53 24" fill="none" stroke="#71440f" strokeWidth="3.5" strokeLinecap="round" />
          <path d="M14 34H52Q50 54 33 54Q16 54 14 34Z" fill="#68400f" />
          <path d="M15 34H51Q51 41 48 43Q33 46 18 43Q15 41 15 34Z" fill="#fff" />
          <path d="M13 32Q16 48 7 48Q-2 46 2 38ZM53 32Q50 48 59 48Q68 46 64 38Z" fill="url(#tear)" />
        </symbol>
        <symbol id="thumb" viewBox="0 0 60 62">
          <path d="M2 32Q3 27 16 28Q29 20 28 5Q36 -2 39 8Q40 16 36 25H51Q58 26 56 33Q59 38 55 41Q58 47 53 49Q54 56 47 57Q36 62 18 57L3 54Z" fill="url(#skin)" />
          <path d="M36 34H55M38 42H54M38 50H52" stroke="#d98b1c" strokeWidth="2.2" />
        </symbol>
        <symbol id="clap" viewBox="0 0 72 74">
          <path d="M3 8L9 12M6 2L12 6M14 1L15 8M50 3L49 9M57 2L54 9M66 5L59 10M68 13L61 15" stroke="#4a66a0" strokeWidth="2.4" strokeLinecap="round" />
          <path d="M9 26Q8 18 15 22L10 16Q12 11 18 15L22 18Q20 10 28 10L46 29Q44 13 51 15Q59 18 59 31Q65 45 71 54L69 66L50 74Q33 73 24 56L8 36Q5 29 9 26Z" fill="url(#skin)" />
          <path d="M13 27L29 46M18 20L36 41M25 17L42 35M46 31L51 44M48 71Q57 66 68 65" fill="none" stroke="#ce8118" strokeWidth="1.8" strokeLinecap="round" />
        </symbol>
        <symbol id="huff" viewBox="0 0 72 74">
          <circle cx="36" cy="36" r="34" fill="url(#face)" />
          <path d="M10 17Q21 14 29 22M43 22Q51 14 62 17M13 30Q21 35 29 30M43 30Q51 35 59 30" fill="none" stroke="#71440f" strokeWidth="3" strokeLinecap="round" />
          <path d="M28 42Q29 73 14 73Q3 73 3 63Q1 53 11 52Q19 53 28 42ZM44 42Q43 73 58 73Q69 73 69 63Q71 53 61 52Q53 53 44 42Z" fill="#e6eef8" />
          <path d="M10 66Q18 68 19 59M62 66Q54 68 53 59" stroke="#b5c4d8" strokeWidth="2" fill="none" />
        </symbol>
        <symbol id="palm" viewBox="0 0 72 74">
          <path d="M7 73Q9 59 26 57H48Q64 60 65 73Z" fill="#3fb09f" />
          <path d="M14 44Q8 4 37 3Q65 4 62 42Q60 54 48 54L24 57Q16 54 14 44Z" fill="#eba326" />
          <path d="M19 33Q22 21 42 14Q54 22 55 38Q52 57 38 58Q22 56 19 33Z" fill="#ffd75f" />
          <path d="M15 33Q18 17 40 12Q52 18 58 34Q59 6 38 5Q14 7 15 33Z" fill="#fcc544" />
          <path d="M25 31Q37 22 47 30Q58 35 56 47L49 58L39 53L27 43Q24 38 33 37Z" fill="#fbbb37" />
          <path d="M28 32L39 37M27 41L38 42M31 48L40 46M26 51Q30 49 34 51" stroke="#a56d1b" strokeWidth="1.7" fill="none" strokeLinecap="round" />
          <path d="M43 54Q52 48 58 53L62 73H42Z" fill="#4dbbab" />
          <path d="M42 58V73" stroke="#278a7e" strokeWidth="1.6" />
        </symbol>
      </defs>
    </svg>
  );
}

function Emoji({ name, className }) {
  return (
    <svg className={className}>
      <use href={`#${name}`} />
    </svg>
  );
}

function EmojiLine({ names, className }) {
  return (
    <span className={"flex h-6 gap-px " + className}>
      {names.map((n, i) => (
        <Emoji key={i} name={n} className="size-6" />
      ))}
    </span>
  );
}

/* ---------- messages ---------- */
function Ticks() {
  return (
    <svg className="ml-[4px] h-[14px] w-5 shrink-0" viewBox="0.6 0 20 14" fill="none" stroke="#53b4dc" strokeWidth="1.6">
      <path d="M.8 8.2L5.5 12.4L15.2 1.4M10.6 11L12 12.4L20.2 1.4" />
    </svg>
  );
}

function Stamp({ time, out }) {
  return (
    <span
      className={
        "flex shrink-0 items-center self-end whitespace-nowrap text-[14.9px] leading-[20px] " +
        (out ? "text-[#9bb3a7]" : "text-[#a3a4a4]")
      }
    >
      {time}
      {out && <Ticks />}
    </span>
  );
}

function Tail({ out }) {
  return out ? (
    <svg className="absolute -right-[7px] top-0 h-3.5 w-[17px]" viewBox="0 0 17 14">
      <path d="M0 0H17V4L10 13H0Z" fill="#144d37" />
    </svg>
  ) : (
    <svg className="absolute -left-2 top-0 h-3.5 w-[18px]" viewBox="0 0 18 14">
      <path d="M2 0H18V14H8V10L1 2Q0 0 2 0Z" fill="#242626" />
    </svg>
  );
}

function Reaction({ name }) {
  return (
    <span className="absolute -bottom-[27px] left-[11px] flex h-[31px] w-[35px] items-center justify-center rounded-full border border-[#161717] bg-[#242626]">
      <Emoji name={name} className="size-[21px]" />
    </span>
  );
}

function Bubble({ out, tail, time, size, tall, low, reaction, children }) {
  return (
    <div
      className={
        "relative flex shrink-0 justify-between rounded-[10px] pb-[3px] pl-[11px] pr-[9px] shadow-[0_1px_1px_rgba(0,0,0,0.18)] " +
        (tall ? "flex-col " : "") +
        (out ? "self-end bg-[#144d37] " : "self-start bg-[#242626] ") +
        size
      }
    >
      {tail && <Tail out={out} />}
      {typeof children === "string" ? <Text low={low}>{children}</Text> : children}
      <Stamp time={time} out={out} />
      {reaction && <Reaction name={reaction} />}
    </div>
  );
}

function Text({ low, children }) {
  return (
    <span
      className={
        "relative flex whitespace-pre text-[18px] leading-[25px] tracking-[-0.01px] text-[#fafafa] " +
        (low ? "mt-[8px]" : "mt-[7px]")
      }
    >
      {children}
    </span>
  );
}

export default function App() {
  return (
    <main className="relative h-[797px] w-[1238px] overflow-hidden bg-[#161717] font-['Roboto',sans-serif]">
      <Wallpaper />
      <EmojiDefs />
      <div className="relative flex h-full flex-col pl-[30px] pr-[7px]">
        <Bubble out time="6:24 PM" size="-mt-[10px] h-[42px] w-[387px]">(apparently spotted in copenhagen)</Bubble>
        <Bubble tail tall time="9:44 PM" reaction="joy" size="mt-[15px] h-[66px] w-[780px]">
          <Text>
            <svg className="mr-[3px] mt-0.5 h-[22px] w-[33px]" viewBox="0 0 33 22">
              <path d="M0 6L11 4V3H21V0H30V4L32 5V18L30 20L22 21L20 20V22H12V19H0Z" fill="#fff" />
            </svg>
            {"... Trump is a spoiled brat. Someone should give a good spank for Greenland  matter."}
          </Text>
        </Bubble>
        <Bubble time="9:44 PM" reaction="thumb" size="mt-[35px] h-[42px] w-[725px]">
          {"He is very adamant. He's blackmailing UK & European countries. Not good for U S"}
        </Bubble>
        <Bubble time="9:44 PM" size="mt-[35px] h-[43px] w-[230px]">
          <EmojiLine className="mt-[9px]" names={["rofl", "rofl", "rofl", "clap", "clap", "clap"]} />
        </Bubble>
        <Bubble out tail tall time="9:47 PM" size="mt-[15px] h-[66px] w-[781px]">
          yah, anyway...I think Mark Rutte and some other europeans that are very friendly to him etc
        </Bubble>
        <Bubble out time="9:47 PM" size="mt-[3px] h-[42px] w-[312px]">will calm him down slowly</Bubble>
        <Bubble tail tall time="9:47 PM" size="mt-[15px] h-[93px] w-[152px]">
          <span className="ml-[19px] mt-4 flex gap-[3px]">
            <Emoji name="rofl" className="size-11" />
            <Emoji name="rofl" className="size-11" />
          </span>
        </Bubble>
        <Bubble out tail low time="9:47 PM" size="mt-[15px] h-[43px] w-[503px]">that guy was NATO chief, maybe he still is, I forgot</Bubble>
        <Bubble out low time="9:48 PM" size="mt-[2px] h-[43px] w-[501px]">it is very silly political circus now, thanks to Trump</Bubble>
        <Bubble tail time="9:48 PM" size="mt-[15px] h-[42px] w-[276px]">Better ... for world peace</Bubble>
        <Bubble out tail low time="9:48 PM" size="mt-[15px] h-[43px] w-[463px]">they dont know what to do with this guy haha</Bubble>
        <Bubble tail time="9:48 PM" size="mt-[15px] h-[42px] w-[230px]">
          <EmojiLine className="mt-[8px]" names={["huff", "huff", "huff", "palm", "palm", "palm"]} />
        </Bubble>
      </div>
    </main>
  );
}
